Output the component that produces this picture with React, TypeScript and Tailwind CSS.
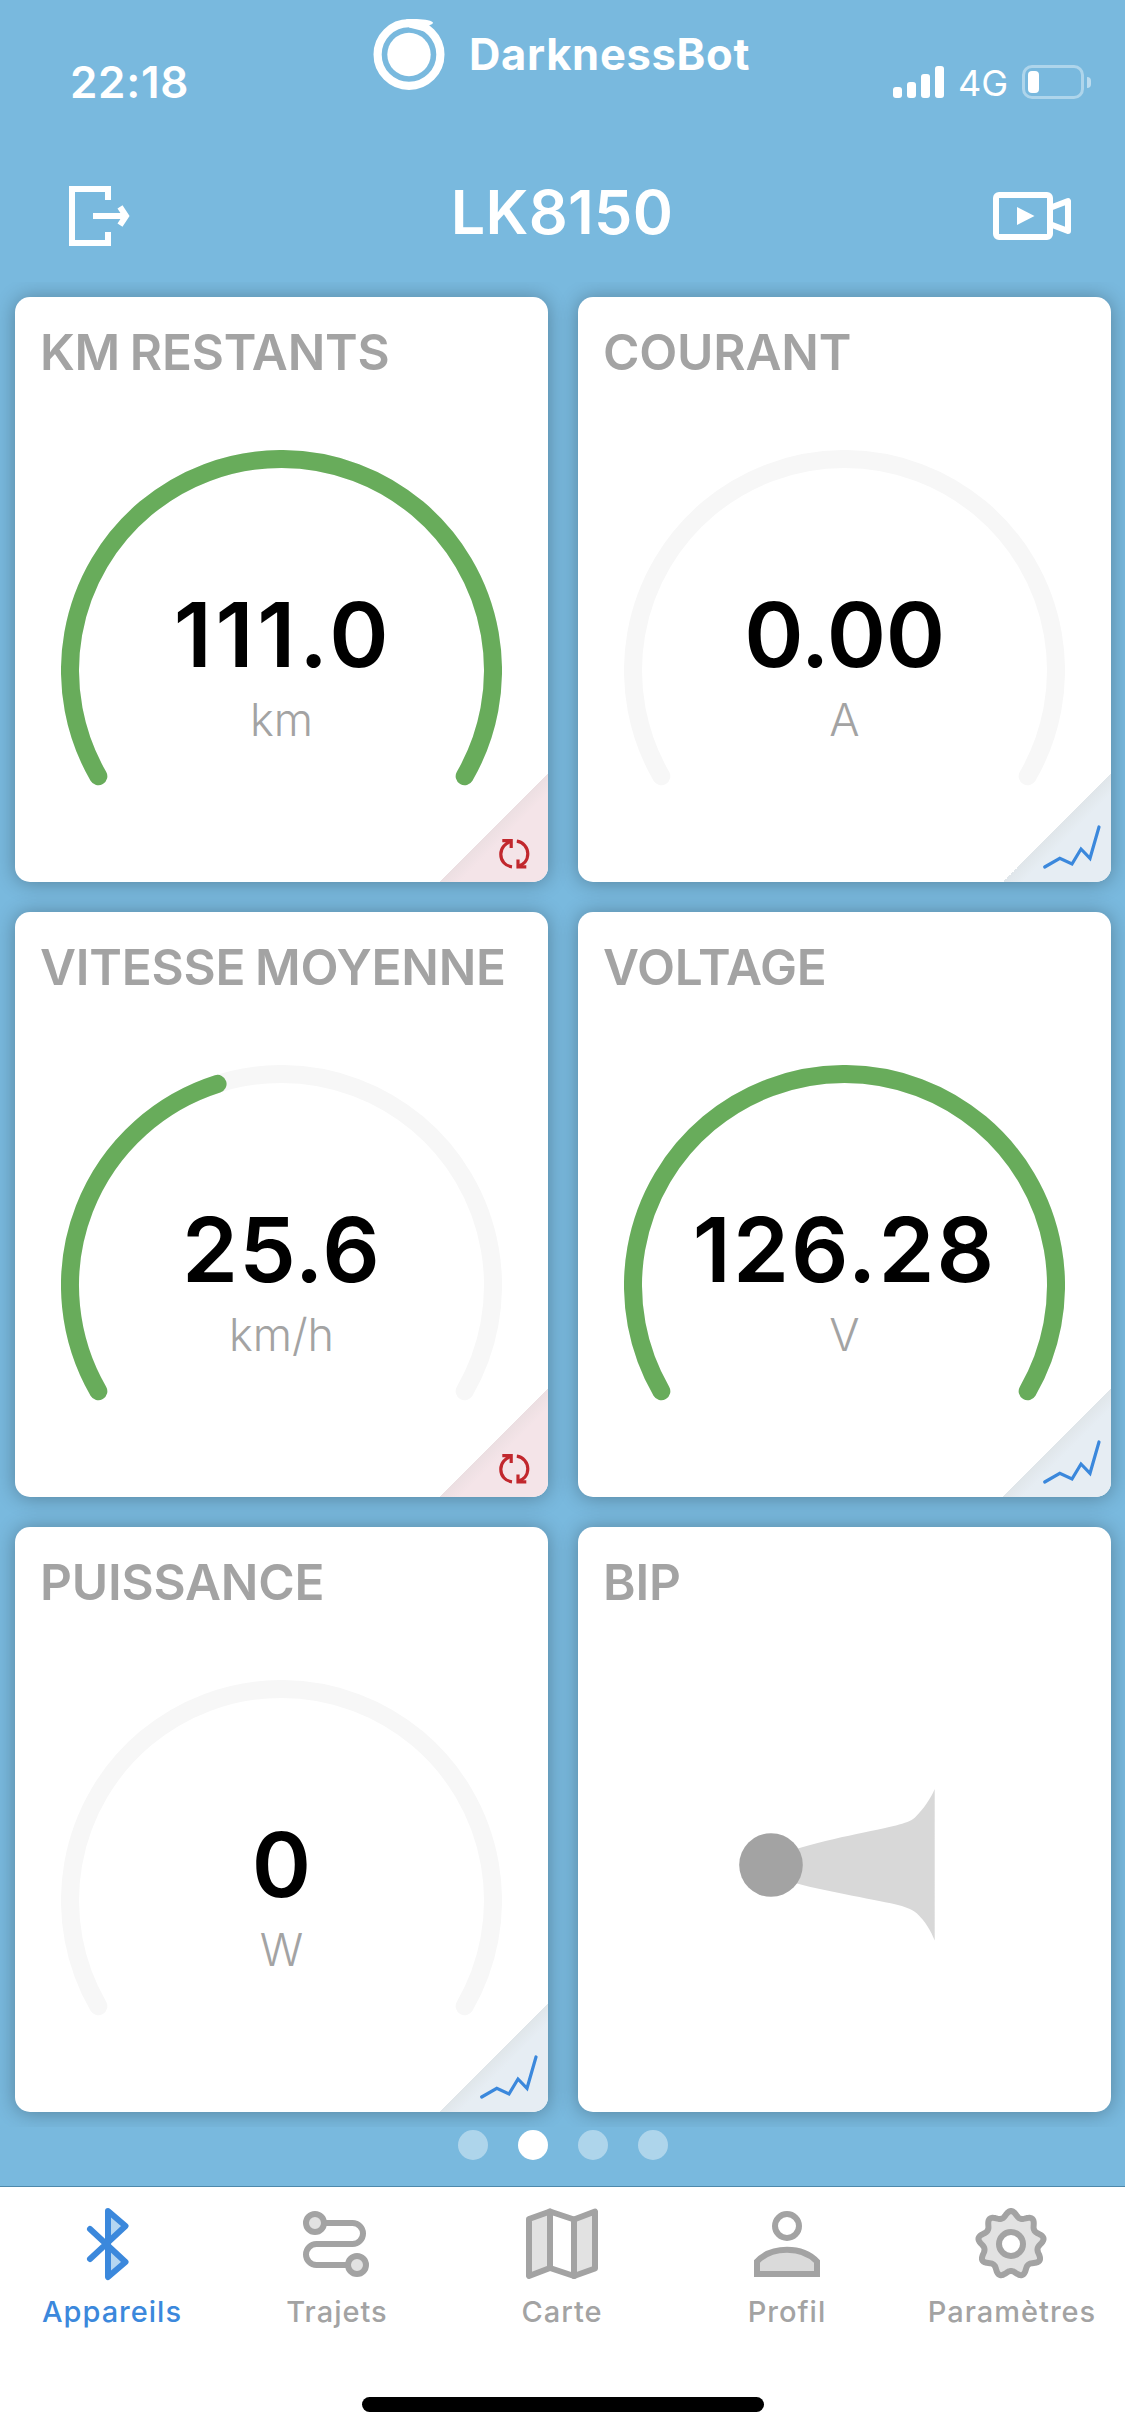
import React from "react";
import clsx from "clsx";

type Corner = "reset" | "chart";

type Metric = {
  title: string;
  value: string;
  unit: string;
  ratio: number;
  corner: Corner;
  tracking?: string;
};

const METRICS: Metric[] = [
  { title: "KM RESTANTS", value: "111.0", unit: "km", ratio: 1, corner: "reset", tracking: "tracking-[3.8px] -mr-[3px]" },
  { title: "COURANT", value: "0.00", unit: "A", ratio: 0, corner: "chart", tracking: "tracking-[-0.3px]" },
  { title: "VITESSE MOYENNE", value: "25.6", unit: "km/h", ratio: 0.4267, corner: "reset", tracking: "tracking-[1.2px]" },
  { title: "VOLTAGE", value: "126.28", unit: "V", ratio: 1, corner: "chart", tracking: "tracking-[2px]" },
  { title: "PUISSANCE", value: "0", unit: "W", ratio: 0, corner: "chart" },
];

// Gauge runs over 240°, starting at the lower left
const CX = 220.5;
const CY = 220.5;
const R = 211.5;

function point(deg: number) {
  const rad = (deg * Math.PI) / 180;
  return `${(CX + R * Math.sin(rad)).toFixed(2)} ${(CY - R * Math.cos(rad)).toFixed(2)}`;
}

function arc(ratio: number) {
  const sweep = 240 * ratio;
  return `M${point(-120)} A${R} ${R} 0 ${sweep > 180 ? 1 : 0} 1 ${point(-120 + sweep)}`;
}

function gearPath(cx: number, cy: number) {
  const pts: string[] = [];
  for (let i = 0; i < 180; i++) {
    const t = (i / 180) * Math.PI * 2;
    const r = 27 + 6 * Math.pow((1 + Math.cos(9 * t)) / 2, 1.2);
    pts.push(`${(cx + r * Math.sin(t)).toFixed(2)} ${(cy - r * Math.cos(t)).toFixed(2)}`);
  }
  return `M${pts.join("L")}Z`;
}

function StatusBar() {
  return (
    <div className="flex h-[132px] items-start text-white">
      <div className="w-[373px] pt-[60px] pl-[70px] text-[44px] leading-none font-semibold tracking-[0.7px]">
        22:18
      </div>
      <div className="flex w-[520px] items-start gap-[22px] pt-[18px]">
        <svg width="74" height="74" viewBox="0 0 74 74" fill="none">
          <circle cx="36" cy="36.5" r="21.7" fill="#fff" />
          <circle cx="36" cy="36.5" r="31.4" stroke="#fff" strokeWidth="8.2" />
          <path
            d="M33 1.3C44 0.4 57 1.6 59.8 4.2C60.6 5.6 58 6.8 55 7.4L57 9L50 13L36 9.5Z"
            fill="#fff"
          />
        </svg>
        <span className="pt-[15px] text-[43.5px] leading-none font-bold tracking-[0.7px]">DarknessBot</span>
      </div>
      <div className="flex items-start">
        <div className="flex h-[98px] items-end gap-[5px]">
          <i className="h-[11px] w-[9px] rounded-[3px] bg-white" />
          <i className="h-[16px] w-[9px] rounded-[3px] bg-white" />
          <i className="h-[24px] w-[9px] rounded-[3px] bg-white" />
          <i className="h-[32px] w-[9px] rounded-[3px] bg-white" />
        </div>
        <span className="w-[78px] pt-[65px] pl-[14px] text-[36px] leading-none">4G</span>
        <div className="flex items-center gap-[3px] pt-[65px]">
          <div className="h-[34px] w-[62px] rounded-[10px] border-[3px] border-white/40 p-[3px]">
            <div className="h-[22px] w-[11px] rounded-[4px] bg-white" />
          </div>
          <div className="h-[11px] w-[4px] rounded-r-full bg-white/50" />
        </div>
      </div>
    </div>
  );
}

function Header() {
  return (
    <div className="flex h-[150px] items-start justify-between pr-[54px] pl-[69px] text-white">
      <svg className="mt-[54px]" width="62" height="60" viewBox="0 0 62 60" fill="none" stroke="#fff" strokeWidth="6">
        <path d="M39 14V3H3V57H39V46" />
        <path d="M24 30H57" />
        <path d="M51 20.8L57 30L51 39.2" />
      </svg>
      <h1 className="mt-[50px] text-[61px] leading-none font-semibold tracking-[0.3px]">LK8150</h1>
      <svg className="mt-[60px]" width="78" height="48" viewBox="0 0 78 48" fill="none" stroke="#fff" strokeWidth="6">
        <rect x="3" y="3" width="54" height="42" rx="3" />
        <path d="M58 15.5L75 9V39L58 32.5" strokeLinejoin="round" />
        <path d="M24 15L41.5 24L24 33Z" fill="#fff" stroke="none" />
      </svg>
    </div>
  );
}

function CornerBadge({ type }: { type: Corner }) {
  return (
    <div
      className={clsx(
        "absolute right-0 bottom-0 h-[108px] w-[108px]",
        type === "reset"
          ? "bg-[linear-gradient(135deg,transparent_50%,#ecdfe2_50%,#f4e4e8_59%)]"
          : "bg-[linear-gradient(135deg,transparent_50%,#e0e6ea_50%,#e6edf3_59%)]"
      )}
    >
      <svg width="108" height="108" viewBox="0 0 108 108" fill="none">
        {type === "reset" ? (
          <g stroke="#c1272d" strokeWidth="3.2" transform="translate(59.3 65)">
            <path d="M12.4 2.2C6 4 1.5 9 1.5 15.2C1.5 22 6 27 12.7 27.8" />
            <path d="M3 1.7H11.9V9" />
            <path d="M17.5 2.2C24 3 28.5 8.5 28.5 14.8C28.5 21 24.5 26 18 27.6" />
            <path d="M27 27.8H18.7V20.5" />
          </g>
        ) : (
          <path
            d="M41.7 93L56.8 84.3L69 90L78 75L87 84.3L96 53"
            stroke="#3b88dc"
            strokeWidth="3.2"
            strokeLinecap="round"
          />
        )}
      </svg>
    </div>
  );
}

function Card({ title, children }: { title: string; children: React.ReactNode }) {
  return (
    <section className="relative flex h-[585px] flex-col items-center overflow-hidden rounded-[15px] bg-white">
      <h2 className="h-[80px] w-full pt-[31px] pl-[25px] text-[49.5px] leading-none font-semibold tracking-[-0.2px] whitespace-nowrap text-[#a3a3a3] [word-spacing:-2.5px]">
        {title}
      </h2>
      {children}
    </section>
  );
}

function Gauge({ value, unit, ratio, tracking }: Omit<Metric, "title" | "corner">) {
  return (
    <div className="mt-[73px] grid">
      <svg className="[grid-area:1/1]" width="441" height="336" viewBox="0 0 441 336" fill="none" strokeWidth="18" strokeLinecap="round">
        <path d={arc(1)} stroke="#f7f7f7" />
        {ratio > 0 && <path d={arc(ratio)} stroke="#68ac5b" />}
      </svg>
      <div className="flex flex-col items-center pt-[140px] [grid-area:1/1]">
        <span className={clsx("text-[90px] leading-none font-semibold text-black", tracking)}>{value}</span>
        <span className="mt-[17px] text-[45px] leading-none font-light text-[#a3a3a3]">{unit}</span>
      </div>
    </div>
  );
}

function Horn() {
  return (
    <svg className="mt-[176px] mr-[15px]" width="198" height="160" viewBox="738 1783 198 160">
      <path
        d="M790 1851C822 1840 880 1829.5 896 1825.5C905 1823 911 1821 915 1817.5C924 1808.5 931 1798 934.7 1789V1940.500C931 1931 925 1921 917 1913.5C911 1908.5 904 1906.5 896 1904.5C870 1898.5 822 1891 790 1881.5Z"
        fill="#d8d8d8"
      />
      <circle cx="771" cy="1865" r="31.8" fill="#a3a3a3" />
    </svg>
  );
}

const TABS = [
  {
    label: "Appareils",
    active: true,
    icon: (
      <>
        <path d="M36 6L53.5 21L36 39ZM36 39L53.5 57L36 72Z" fill="#b5d6f1" stroke="none" />
        <path d="M18 24L53.5 57L36 72V6L53.5 21L18 54" />
      </>
    ),
  },
  {
    label: "Trajets",
    icon: (
      <>
        <path d="M27 18H55.5a10.5 10.5 0 0 1 0 21H19.5a10.5 10.5 0 0 0 0 21H51" />
        <circle cx="18" cy="18" r="9" fill="#e2e2e2" />
        <circle cx="60" cy="60" r="9" fill="#e2e2e2" />
      </>
    ),
  },
  {
    label: "Carte",
    icon: (
      <>
        <path d="M7 14L28 6.5V63L7 71ZM52 14.5L73 6.5V63.5L52 71Z" fill="#e2e2e2" />
        <path d="M28 6.5L52 14.5V71L28 63Z" />
      </>
    ),
  },
  {
    label: "Profil",
    icon: (
      <>
        <circle cx="40" cy="21" r="12" />
        <path d="M10 69V56.5Q21 44.7 40 44.7Q59 44.7 70 56.5V69Z" fill="#dadada" strokeLinejoin="miter" />
      </>
    ),
  },
  {
    label: "Paramètres",
    icon: (
      <>
        <path d={gearPath(39, 39)} fill="#e2e2e2" />
        <circle cx="39" cy="39" r="12" fill="#fff" />
      </>
    ),
  },
];

function TabBar() {
  return (
    <nav className="flex h-[250px] flex-col border-t border-[#4d88ab] bg-white">
      <div className="grid grid-cols-5">
        {TABS.map((tab) => (
          <div
            key={tab.label}
            className={clsx("flex flex-col items-center pt-[18px]", tab.active ? "text-[#3b88dc]" : "text-[#a3a3a3]")}
          >
            <svg
              width="81"
              height="78"
              viewBox="0 0 81 78"
              fill="none"
              stroke="currentColor"
              strokeWidth="6"
              strokeLinecap="round"
              strokeLinejoin="round"
            >
              {tab.icon}
            </svg>
            <span className="mt-[14px] mr-[1px] text-[29px] leading-none font-medium tracking-[1px]">{tab.label}</span>
          </div>
        ))}
      </div>
      <div className="mt-auto mb-[24px] h-[15px] w-[402px] self-center rounded-full bg-black" />
    </nav>
  );
}

export default function App() {
  return (
    <div className="flex h-[2436px] w-[1125px] flex-col overflow-hidden bg-[#79b9de] font-['Inter',sans-serif]">
      <StatusBar />
      <Header />
      <main className="grid h-[1845px] grid-cols-[533px_533px] gap-[30px] overflow-hidden p-[15px] [&>section]:shadow-[0_1px_20px_rgba(0,0,0,0.3)]">
        {METRICS.map(({ title, corner, ...gauge }) => (
          <Card key={title} title={title}>
            <Gauge {...gauge} />
            <CornerBadge type={corner} />
          </Card>
        ))}
        <Card title="BIP">
          <Horn />
        </Card>
      </main>
      <div className="flex flex-1 justify-center gap-[30px] pt-[3px]">
        {[0, 1, 2, 3].map((i) => (
          <span key={i} className={clsx("h-[30px] w-[30px] rounded-full", i === 1 ? "bg-white" : "bg-white/40")} />
        ))}
      </div>
      <TabBar />
    </div>
  );
}
